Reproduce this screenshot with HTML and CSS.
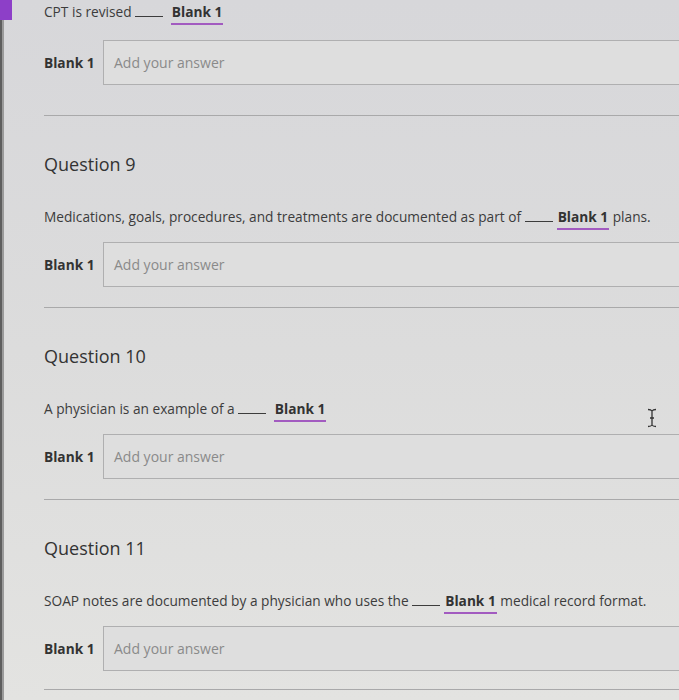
FILE: index.html
```html
<!DOCTYPE html>
<html lang="en">
<head>
<meta charset="utf-8">
<title>Quiz</title>
<link rel="stylesheet" href="styles.css">
</head>
<body>
<div class="page">
  <div class="edge"></div>
  <div class="nav-tab"></div>
  <main class="content">
    <section class="q q-first">
      <p class="prompt">CPT is revised <span class="gap"></span> <span class="blank">Blank 1</span></p>
      <div class="answer"><span class="label">Blank 1</span><div class="input">Add your answer</div></div>
    </section>

    <section class="q">
      <h2 class="title">Question 9</h2>
      <p class="prompt">Medications, goals, procedures, and treatments are documented as part of <span class="gap"></span><span class="blank">Blank 1</span> plans.</p>
      <div class="answer"><span class="label">Blank 1</span><div class="input">Add your answer</div></div>
    </section>

    <section class="q">
      <h2 class="title">Question 10</h2>
      <p class="prompt">A physician is an example of a <span class="gap"></span> <span class="blank">Blank 1</span></p>
      <div class="answer"><span class="label">Blank 1</span><div class="input">Add your answer</div></div>
    </section>

    <section class="q q-last">
      <h2 class="title">Question 11</h2>
      <p class="prompt">SOAP notes are documented by a physician who uses the <span class="gap"></span><span class="blank">Blank 1</span> medical record format.</p>
      <div class="answer"><span class="label">Blank 1</span><div class="input">Add your answer</div></div>
    </section>
  </main>
  <svg class="cursor" width="12" height="20" viewBox="0 0 12 20" aria-hidden="true">
    <path d="M2 1.5 Q5 1.5 6 3 Q7 1.5 10 1.5 M6 3 V17 M2 18.5 Q5 18.5 6 17 Q7 18.5 10 18.5 M4 10 H8" fill="none" stroke="#333" stroke-width="1.3"/>
  </svg>
</div>
</body>
</html>
```

FILE: styles.css
```css
html, body {
  margin: 0;
  padding: 0;
  overflow: hidden;
}

body {
  background: linear-gradient(180deg, #d7d7da 0%, #dcdcdc 50%, #e3e3e1 100%);
  font-family: "Open Sans", "Noto Sans", sans-serif;
  color: #3a3a3a;
  width: 679px;
  height: 700px;
}

.page {
  position: relative;
  display: flex;
  min-height: 700px;
}

.edge {
  flex: 0 0 4px;
  background: linear-gradient(90deg, #5e5e5e 0 2px, #9a9a9a 2px 4px);
}

.nav-tab {
  position: absolute;
  left: 0;
  top: 0;
  width: 12px;
  height: 20px;
  background: #8d3fc8;
}

.content {
  flex: 1;
  padding-left: 40px;
  min-width: 0;
}

.q {
  border-top: 1px solid #a9a9aa;
  padding: 0 0 20px;
}

.q-first {
  border-top: none;
  padding-bottom: 30px;
}

.q-last {
  border-bottom: 1px solid #a9a9aa;
  padding-bottom: 18px;
}

.title {
  margin: 36px 0 0;
  font-size: 18px;
  line-height: 24px;
  font-weight: 400;
  color: #333;
}

.prompt {
  margin: 31px 0 0;
  font-size: 13.7px;
  line-height: 20px;
  color: #3c3c3c;
  white-space: nowrap;
}

.q-first .prompt {
  margin-top: 2px;
}

.gap {
  display: inline-block;
  width: 28px;
  margin-right: 4px;
  border-bottom: 1px solid #3c3c3c;
  vertical-align: baseline;
}

.blank {
  font-weight: 700;
  color: #333;
  border-bottom: 2px solid #a25bc0;
  padding: 0 1px 2px;
}

.answer {
  display: flex;
  align-items: center;
  margin-top: 15px;
}

.q-first .answer {
  margin-top: 18px;
}

.label {
  flex: 0 0 59px;
  font-size: 13.7px;
  font-weight: 700;
  color: #333;
}

.input {
  flex: 1;
  height: 43px;
  display: flex;
  align-items: center;
  padding-left: 10px;
  border: 1px solid #afafb0;
  border-right: none;
  background: #dedede;
  font-size: 14px;
  color: #8a8a8a;
}

.cursor {
  position: absolute;
  left: 646px;
  top: 408px;
}
```
